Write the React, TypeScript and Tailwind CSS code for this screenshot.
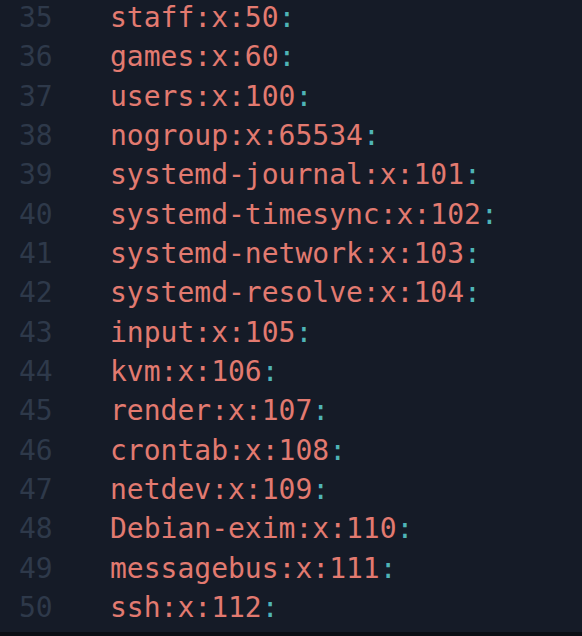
const lines: [number, string][] = [
  [35, "staff:x:50"],
  [36, "games:x:60"],
  [37, "users:x:100"],
  [38, "nogroup:x:65534"],
  [39, "systemd-journal:x:101"],
  [40, "systemd-timesync:x:102"],
  [41, "systemd-network:x:103"],
  [42, "systemd-resolve:x:104"],
  [43, "input:x:105"],
  [44, "kvm:x:106"],
  [45, "render:x:107"],
  [46, "crontab:x:108"],
  [47, "netdev:x:109"],
  [48, "Debian-exim:x:110"],
  [49, "messagebus:x:111"],
  [50, "ssh:x:112"],
];

export default function App() {
  return (
    <div className="w-[582px] h-[636px] bg-[#0b0e14] flex flex-col overflow-hidden">
      <div
        className="h-[632px] bg-[#151b27] overflow-hidden text-[28px] leading-[39.33px]"
        style={{ fontFamily: '"DejaVu Sans Mono", "Liberation Mono", monospace' }}
      >
        <div className="-mt-[2px]">
          {lines.map(([n, text]) => (
            <div key={n} className="flex whitespace-pre">
              <span className="w-[110px] pl-[19px] text-[#2e394a] shrink-0">{n}</span>
              <span className="text-[#e27a70]">{text}</span>
              <span className="text-[#4fb4b6]">:</span>
            </div>
          ))}
        </div>
      </div>
    </div>
  );
}
